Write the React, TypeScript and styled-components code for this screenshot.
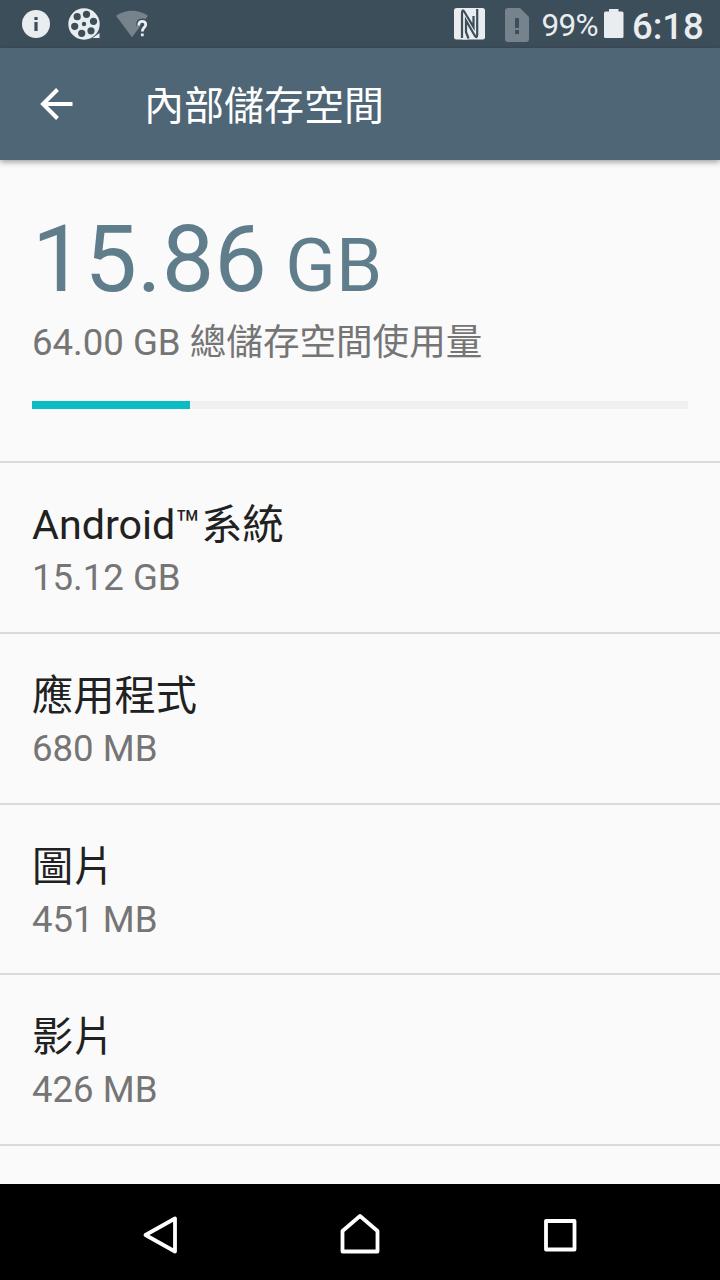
import React from 'react';
import styled, { createGlobalStyle } from 'styled-components';

const Global = createGlobalStyle`
  * { box-sizing: border-box; }
  body { margin: 0; background: #fafafa; }
`;

const Screen = styled.div`
  width: 720px;
  height: 1280px;
  display: flex;
  flex-direction: column;
  overflow: hidden;
  background: #fafafa;
  font-family: Roboto, 'Noto Sans CJK TC', sans-serif;
`;

const StatusBar = styled.header`
  height: 48px;
  flex: none;
  display: flex;
  align-items: center;
  justify-content: space-between;
  padding: 0 16px 0 20px;
  background: #3d4e5b;
  color: #e9edef;
`;

const StatusGroup = styled.div<{ $gap?: number }>`
  display: flex;
  align-items: center;
  gap: ${(p) => p.$gap ?? 0}px;
  height: 48px;
`;

const Battery = styled.span`
  font-size: 31.5px;
  letter-spacing: -0.7px;
  line-height: 48px;
  width: 62.5px;
  margin-left: 13px;
  padding-top: 3px;
  white-space: nowrap;
`;

const Clock = styled.span`
  font-size: 36.5px;
  font-weight: 500;
  line-height: 48px;
  width: 72px;
  margin-left: 8px;
  padding-top: 5px;
  white-space: nowrap;
`;

const AppBar = styled.div`
  height: 112px;
  flex: none;
  display: flex;
  align-items: center;
  padding-left: 30.5px;
  background: #4f6676;
  box-shadow: 0 2px 6px rgba(0, 0, 0, 0.38);
  z-index: 1;
`;

const Title = styled.h1`
  margin: 0 0 0 63.5px;
  padding-top: 6px;
  font-size: 40px;
  line-height: 60px;
  font-weight: 400;
  color: #fff;
`;

const Content = styled.main`
  flex: 1;
  min-height: 0;
  overflow: hidden;
`;

const Summary = styled.section`
  height: 303.4px;
  padding: 43px 32px 0;
  border-bottom: 2px solid #dadada;
`;

const Used = styled.div`
  font-size: 93.5px;
  line-height: 112px;
  margin-bottom: -4px;
  color: #607d8b;
  white-space: nowrap;
`;

const Unit = styled.span`
  font-size: 74.3px;
  white-space: pre;
`;

const Caption = styled.div`
  font-size: 36.6px;
  line-height: 50px;
  color: #757575;
  white-space: nowrap;
`;

const Track = styled.div`
  height: 8px;
  margin-top: 33px;
  background: #f0f0f0;
`;

const Fill = styled.div`
  width: 158px;
  height: 8px;
  background: #0bbcc3;
`;

const Row = styled.section`
  height: 170.67px;
  padding: 34px 32px 0;
  border-bottom: 2px solid #dadada;
`;

const RowTitle = styled.div`
  font-size: 41.25px;
  line-height: 56px;
  color: #212121;
  white-space: nowrap;
`;

const NavBar = styled.nav`
  height: 96px;
  flex: none;
  display: flex;
  align-items: center;
  justify-content: center;
  gap: 152px;
  padding-top: 6px;
  background: #000;
`;

const rows = [
  ['Android™系統', '15.12 GB'],
  ['應用程式', '680 MB'],
  ['圖片', '451 MB'],
  ['影片', '426 MB'],
];

const InfoIcon = () => (
  <svg width="32" height="48" viewBox="0 0 32 48">
    <circle cx="16" cy="24" r="14" fill="#e9edef" />
    <path d="M14.4 17h3.2v3h-3.2zM14.4 22h3.2v9h-3.2z" fill="#3d4e5b" />
  </svg>
);

const reelHoles = [[18.5, 14.3], [25.5, 21.3], [23, 30.8], [13.7, 33.3], [6.7, 26.3], [9.2, 16.7]];

const ReelIcon = () => (
  <svg width="34" height="48" viewBox="0 0 34 48">
    <circle cx="16" cy="24" r="15.7" fill="#e9edef" />
    <path d="M24.500 38L31.500 33V38Z" fill="#e9edef" />
    {reelHoles.map(([x, y]) => (
      <circle key={`${x}`} cx={x} cy={y} r="3.6" fill="#3d4e5b" />
    ))}
    <circle cx="16" cy="24" r="2.2" fill="#3d4e5b" />
  </svg>
);

const mark = 'M22.700 25.500Q22.700 21.300 26.200 21.300Q29.700 21.300 29.700 24.500C29.700 27.500 26.300 27.700 26.300 31.500M26.300 33.500V36.200';

const WifiIcon = () => (
  <svg width="34" height="48" viewBox="0 0 34 48">
    <path d="M0 15.700Q16 6 32 15.700L16 37.200Z" fill="#76838c" />
    <path d={mark} fill="none" stroke="#3d4e5b" strokeWidth="5.500" />
    <path d={mark} fill="none" stroke="#e9edef" strokeWidth="2.800" />
  </svg>
);

const NfcIcon = () => (
  <svg width="32" height="48" viewBox="0 0 32 48">
    <rect x="0" y="8" width="31" height="31.500" rx="2.500" fill="#e9edef" />
    <path d="M8 39.500V13Q8 8 10.500 11.500L20 28V14L17.500 8H23.200V34.500Q23.200 39.500 20.700 36L11.500 19.500V33.500L14 39.500Z" fill="#e9edef" />
    <g fill="none" stroke="#3d4e5b" strokeWidth="2.200">
      <path d="M8 38V13Q8 8.500 10.500 12L19.500 27V16" />
      <path d="M23.200 9V34.500Q23.200 39 20.700 35.500L12 20.500V32L14.500 38.500" />
    </g>
  </svg>
);

const SimIcon = () => (
  <svg width="24" height="48" viewBox="0 0 24 48">
    <path d="M3 8H15L24 17V39Q24 42 21 42H3Q0 42 0 39V11Q0 8 3 8Z" fill="#76838c" />
    <path d="M10 18h4v10h-4zM10 30h4v4h-4z" fill="#3d4e5b" />
  </svg>
);

const BatteryIcon = () => (
  <svg width="20" height="48" viewBox="0 0 20 48">
    <path d="M5 9H14.500V11.500H18Q19.500 11.500 19.500 13V36.500Q19.500 38 18 38H1.500Q0 38 0 36.500V13Q0 11.500 1.500 11.500H5Z" fill="#e9edef" />
  </svg>
);

const BackArrow = () => (
  <svg width="50" height="48" viewBox="0 0 50 48" fill="none" stroke="#fff" strokeWidth="4">
    <path d="M41.500 24H12M26.500 9.500L12 24L26.500 38.500" />
  </svg>
);

const NavIcon = ({ d }: { d: string }) => (
  <svg width="48" height="48" viewBox="0 0 48 48" fill="none" stroke="#fff" strokeWidth="3.800" strokeLinejoin="round">
    <path d={d} />
  </svg>
);

export default function App() {
  return (
    <Screen>
      <Global />
      <StatusBar>
        <StatusGroup $gap={14}>
          <StatusGroup $gap={16}>
            <InfoIcon />
            <ReelIcon />
          </StatusGroup>
          <WifiIcon />
        </StatusGroup>
        <StatusGroup>
          <StatusGroup $gap={19}>
            <NfcIcon />
            <SimIcon />
          </StatusGroup>
          <Battery>99%</Battery>
          <BatteryIcon />
          <Clock>6:18</Clock>
        </StatusGroup>
      </StatusBar>
      <AppBar>
        <BackArrow />
        <Title>內部儲存空間</Title>
      </AppBar>
      <Content>
        <Summary>
          <Used>15.86<Unit> GB</Unit></Used>
          <Caption>64.00 GB 總儲存空間使用量</Caption>
          <Track><Fill /></Track>
        </Summary>
        {rows.map(([name, size]) => (
          <Row key={name}>
            <RowTitle>{name}</RowTitle>
            <Caption>{size}</Caption>
          </Row>
        ))}
      </Content>
      <NavBar>
        <NavIcon d="M9.500 24L39 7.500V40.500Z" />
        <NavIcon d="M6.500 40.500V20L24 5L41.500 20V40.500Z" />
        <NavIcon d="M10 10H38.500V38.500H10Z" />
      </NavBar>
    </Screen>
  );
}
